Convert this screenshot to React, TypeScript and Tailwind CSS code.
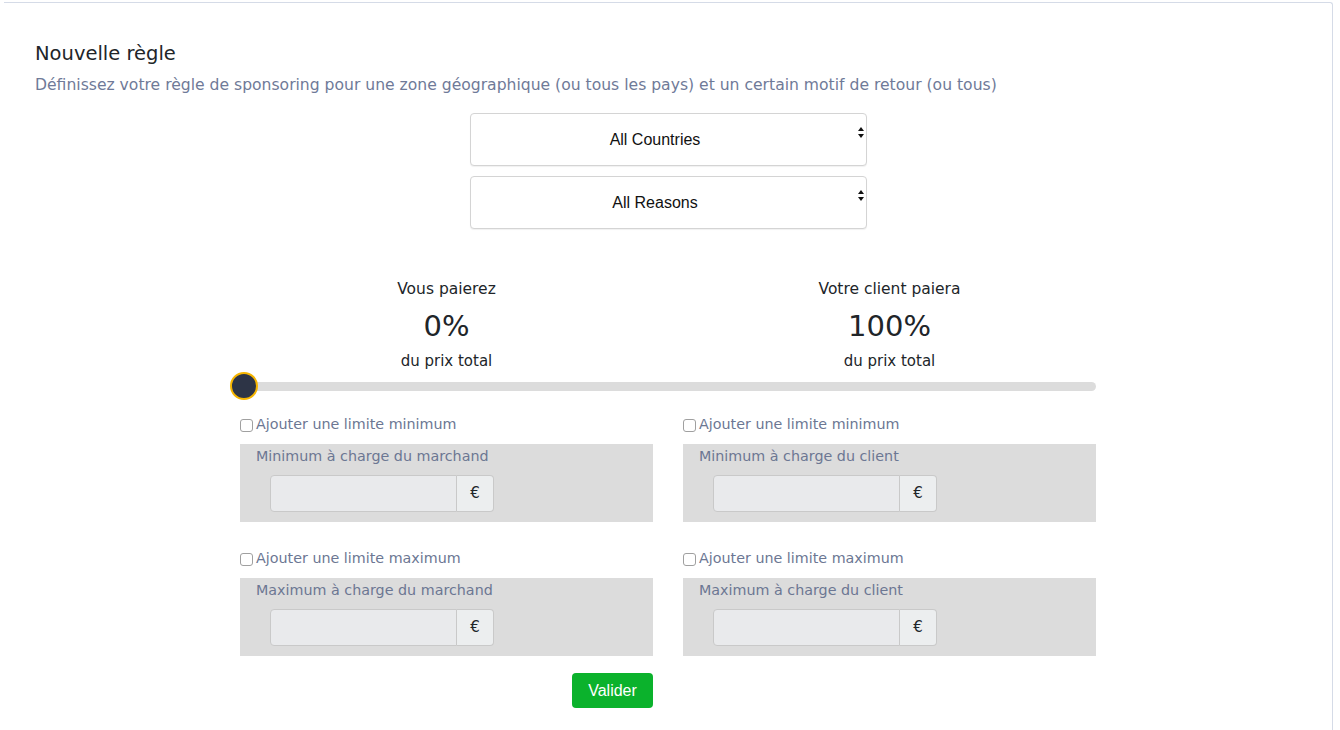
import React from "react";

const font = { fontFamily: '"DejaVu Sans", "Noto Sans", sans-serif' };

const SelectBox = ({ label }: { label: string }) => (
  <div className="relative w-[397px] h-[53px] pr-[26px] bg-white border border-[#d4d4d4] rounded-[4px] shadow-[0_1px_1px_rgba(0,0,0,0.06)] flex items-center justify-center">
    <span className="text-[16px] text-[#111] font-['Liberation_Sans',Arial,sans-serif]">
      {label}
    </span>
    {/* native-like arrows */}
    <svg
      className="absolute right-[2px] top-[13px]"
      width="6"
      height="11"
      viewBox="0 0 6 11"
    >
      <path d="M3 0 L6 4 L0 4 Z" fill="#111" />
      <path d="M0 7 L6 7 L3 11 Z" fill="#111" />
    </svg>
  </div>
);

const Stat = ({ title, value }: { title: string; value: string }) => (
  <div className="flex flex-col items-center text-[#212529]">
    <div className="h-[20px] leading-[20px] text-[15.5px]">{title}</div>
    <div className="mt-[9px] h-[36px] leading-[36px] text-[29px]">{value}</div>
    <div className="mt-[7px] h-[20px] leading-[20px] text-[15px]">du prix total</div>
  </div>
);

const LimitBlock = ({ check, label }: { check: string; label: string }) => (
  <div className="flex flex-col">
    <label className="flex items-center h-[20px] gap-[3px] text-[14.3px] text-[#6c7793]">
      <span className="w-[13px] h-[13px] border border-[#a0a0a0] rounded-[3px] bg-white" />
      <span>{check}</span>
    </label>
    <div className="mt-[9px] h-[78px] bg-[#dcdcdc] pt-[2px] pl-[16px]">
      <div className="h-[20px] leading-[20px] text-[14.3px] text-[#6c7793]">{label}</div>
      <div className="mt-[9px] ml-[14px] flex h-[37px] w-[224px]">
        <div className="w-[187px] h-full bg-[#e9eaec] border border-[#c9c9c9] rounded-l-[4px]" />
        <div className="w-[37px] h-full bg-[#eceeef] border border-l-0 border-[#c9c9c9] rounded-r-[4px] flex items-center justify-center text-[15px] text-[#212529]">
          €
        </div>
      </div>
    </div>
  </div>
);

export default function App() {
  return (
    <div className="w-[1340px] h-[730px] bg-white overflow-hidden" style={font}>
      <div className="mt-[2px] ml-[4px] w-[1329px] h-[740px] bg-white border-t border-r border-[#d5dbe7] rounded-tr-[3px]">
        {/* header */}
        <div className="px-[31px] pt-[39px]">
          <h1 className="h-[24px] leading-[24px] text-[19.5px] text-[#212529]">
            Nouvelle règle
          </h1>
          <p className="mt-[8px] h-[22px] leading-[22px] text-[15.6px] text-[#6f7a98]">
            Définissez votre règle de sponsoring pour une zone géographique (ou tous les pays) et un certain motif de retour (ou tous)
          </p>
        </div>

        {/* selects */}
        <div className="mt-[17px] flex flex-col items-center gap-[10px]">
          <SelectBox label="All Countries" />
          <SelectBox label="All Reasons" />
        </div>

        {/* form */}
        <div className="mx-auto w-[856px] mt-[50px]">
          <div className="grid grid-cols-2 gap-x-[30px]">
            <Stat title="Vous paierez" value="0%" />
            <Stat title="Votre client paiera" value="100%" />
          </div>

          {/* slider */}
          <div className="relative mt-[1px] h-[28px] flex items-center">
            <div className="w-full h-[9px] rounded-full bg-[#dcdcdc]" />
            <div className="absolute left-[-10px] top-0 w-[28px] h-[28px] rounded-full bg-[#2d3446] border-[2.5px] border-[#f6b500]" />
          </div>

          <div className="mt-[15px] grid grid-cols-2 gap-x-[30px]">
            <LimitBlock check="Ajouter une limite minimum" label="Minimum à charge du marchand" />
            <LimitBlock check="Ajouter une limite minimum" label="Minimum à charge du client" />
          </div>

          <div className="mt-[27px] grid grid-cols-2 gap-x-[30px]">
            <LimitBlock check="Ajouter une limite maximum" label="Maximum à charge du marchand" />
            <LimitBlock check="Ajouter une limite maximum" label="Maximum à charge du client" />
          </div>

          <div className="mt-[17px] grid grid-cols-2 gap-x-[30px]">
            <div className="flex justify-end">
              <button className="w-[81px] h-[35px] rounded-[4px] bg-[#0bb22c] text-white text-[16px] font-['Liberation_Sans',Arial,sans-serif]">
                Valider
              </button>
            </div>
            <div />
          </div>
        </div>
      </div>
    </div>
  );
}
